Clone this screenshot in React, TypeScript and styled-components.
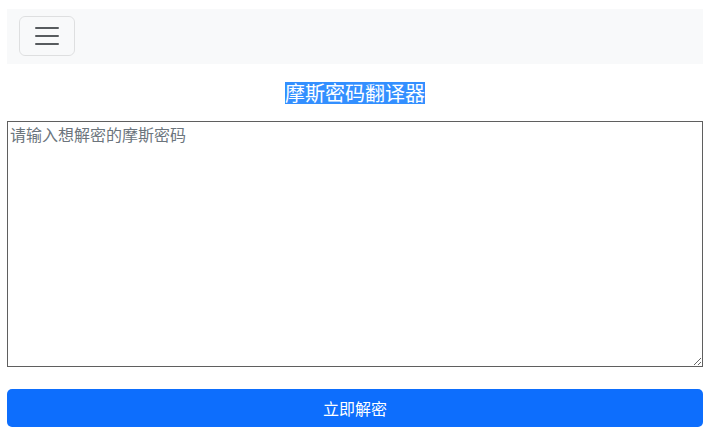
import React from "react";
import styled, { createGlobalStyle } from "styled-components";

const GlobalStyle = createGlobalStyle`
  html, body {
    margin: 0;
    padding: 0;
    background: #fff;
    font-family: "Noto Sans CJK SC", "Noto Sans", sans-serif;
    color: #212529;
  }
`;

const Page = styled.div`
  padding: 9px 6px 0 7px;
  display: flex;
  flex-direction: column;
`;

const Navbar = styled.nav`
  background: #f8f9fa;
  height: 55px;
  display: flex;
  align-items: center;
  padding: 0 12px;
  box-sizing: border-box;
`;

const Toggler = styled.button`
  width: 56px;
  height: 40px;
  box-sizing: border-box;
  padding: 4px 12px;
  background: transparent;
  border: 1px solid rgba(0, 0, 0, 0.1);
  border-radius: 6px;
  display: flex;
  align-items: center;
  justify-content: center;
  cursor: pointer;
  margin-top: -1px;
`;

const Title = styled.div`
  margin: 18px 0 17px;
  text-align: center;
  font-size: 20px;
  line-height: 22px;
  height: 22px;
`;

const Highlight = styled.span`
  display: inline-block;
  background: #338fff;
  color: #fff;
  height: 22px;
  line-height: 22px;
`;

const Input = styled.textarea`
  display: block;
  width: 100%;
  height: 246px;
  box-sizing: border-box;
  margin: 0;
  padding: 2px;
  border: 1px solid #5f5f5f;
  font-family: "Noto Sans CJK SC", "Noto Sans", sans-serif;
  font-size: 16px;
  line-height: 20px;
  color: #212529;
  &::placeholder {
    color: #6c757d;
  }
`;

const Submit = styled.button`
  margin-top: 22px;
  height: 38px;
  width: 100%;
  border: none;
  border-radius: 5px;
  background: #0d6efd;
  color: #fff;
  font-family: "Noto Sans CJK SC", "Noto Sans", sans-serif;
  font-size: 16px;
  cursor: pointer;
`;

const MenuIcon = () => (
  <svg width="30" height="30" viewBox="0 0 30 30">
    <path
      d="M4 7h22M4 15h22M4 23h22"
      stroke="rgba(33,37,41,0.75)"
      strokeWidth="2"
      strokeLinecap="round"
      strokeMiterlimit="10"
    />
  </svg>
);

export default function App() {
  return (
    <>
      <GlobalStyle />
      <Page>
        <Navbar>
          <Toggler aria-label="menu">
            <MenuIcon />
          </Toggler>
        </Navbar>
        <Title>
          <Highlight>摩斯密码翻译器</Highlight>
        </Title>
        <Input placeholder="请输入想解密的摩斯密码" />
        <Submit>立即解密</Submit>
      </Page>
    </>
  );
}
